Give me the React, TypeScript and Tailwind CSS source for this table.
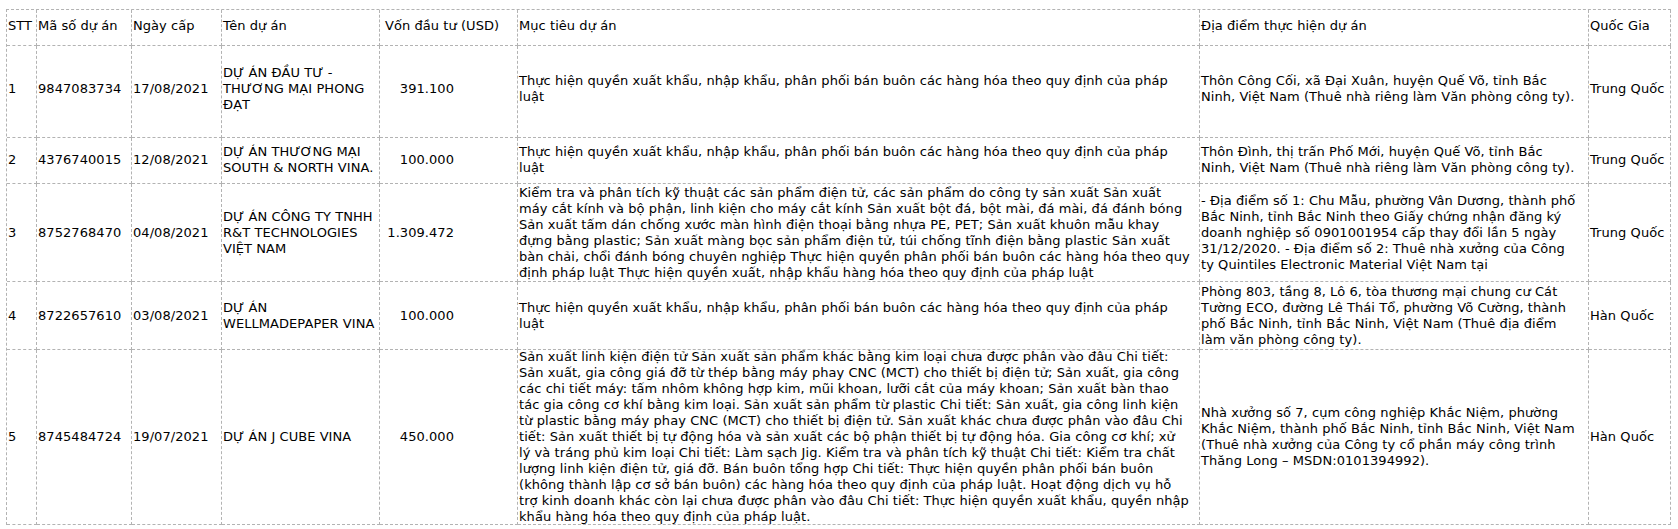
import React from "react";

type Row = {
  stt: string;
  ma: string;
  ngay: string;
  ten: string[];
  von: string;
  muc: string[];
  dia: string[];
  qg: string;
  h: string;
};

const mucChung = [
  "Thực hiện quyền xuất khẩu, nhập khẩu, phân phối bán buôn các hàng hóa theo quy định của pháp",
  "luật",
];

const rows: Row[] = [
  {
    stt: "1",
    ma: "9847083734",
    ngay: "17/08/2021",
    ten: ["DỰ ÁN ĐẦU TƯ -", "THƯƠNG MẠI PHONG", "ĐẠT"],
    von: "391.100",
    muc: mucChung,
    dia: [
      "Thôn Công Cối, xã Đại Xuân, huyện Quế Võ, tỉnh Bắc",
      "Ninh, Việt Nam (Thuê nhà riêng làm Văn phòng công ty).",
    ],
    qg: "Trung Quốc",
    h: "h-[92px] [&>div]:pb-[5px]",
  },
  {
    stt: "2",
    ma: "4376740015",
    ngay: "12/08/2021",
    ten: ["DỰ ÁN THƯƠNG MẠI", "SOUTH & NORTH VINA."],
    von: "100.000",
    muc: mucChung,
    dia: [
      "Thôn Đình, thị trấn Phố Mới, huyện Quế Võ, tỉnh Bắc",
      "Ninh, Việt Nam (Thuê nhà riêng làm Văn phòng công ty).",
    ],
    qg: "Trung Quốc",
    h: "h-[46px] [&>div]:pb-[1px]",
  },
  {
    stt: "3",
    ma: "8752768470",
    ngay: "04/08/2021",
    ten: ["DỰ ÁN CÔNG TY TNHH", "R&T TECHNOLOGIES", "VIỆT NAM"],
    von: "1.309.472",
    muc: [
      "Kiểm tra và phân tích kỹ thuật các sản phẩm điện tử, các sản phẩm do công ty sản xuất Sản xuất",
      "máy cắt kính và bộ phận, linh kiện cho máy cắt kính Sản xuất bột đá, bột mài, đá mài, đá đánh bóng",
      "Sản xuất tấm dán chống xước màn hình điện thoại bằng nhựa PE, PET; Sản xuất khuôn mẫu khay",
      "đựng bằng plastic; Sản xuất màng bọc sản phẩm điện tử, túi chống tĩnh điện bằng plastic Sản xuất",
      "bàn chải, chổi đánh bóng chuyên nghiệp Thực hiện quyền phân phối bán buôn các hàng hóa theo quy",
      "định pháp luật Thực hiện quyền xuất, nhập khẩu hàng hóa theo quy định của pháp luật",
    ],
    dia: [
      "- Địa điểm số 1: Chu Mẫu, phường Vân Dương, thành phố",
      "Bắc Ninh, tỉnh Bắc Ninh theo Giấy chứng nhận đăng ký",
      "doanh nghiệp số 0901001954 cấp thay đổi lần 5 ngày",
      "31/12/2020. - Địa điểm số 2: Thuê nhà xưởng của Công",
      "ty Quintiles Electronic Material Việt Nam tại",
    ],
    qg: "Trung Quốc",
    h: "h-[98px]",
  },
  {
    stt: "4",
    ma: "8722657610",
    ngay: "03/08/2021",
    ten: ["DỰ ÁN", "WELLMADEPAPER VINA"],
    von: "100.000",
    muc: mucChung,
    dia: [
      "Phòng 803, tầng 8, Lô 6, tòa thương mại chung cư Cát",
      "Tường ECO, đường Lê Thái Tổ, phường Võ Cường, thành",
      "phố Bắc Ninh, tỉnh Bắc Ninh, Việt Nam (Thuê địa điểm",
      "làm văn phòng công ty).",
    ],
    qg: "Hàn Quốc",
    h: "h-[68px]",
  },
  {
    stt: "5",
    ma: "8745484724",
    ngay: "19/07/2021",
    ten: ["DỰ ÁN J CUBE VINA"],
    von: "450.000",
    muc: [
      "Sản xuất linh kiện điện tử Sản xuất sản phẩm khác bằng kim loại chưa được phân vào đâu Chi tiết:",
      "Sản xuất, gia công giá đỡ từ thép bằng máy phay CNC (MCT) cho thiết bị điện tử; Sản xuất, gia công",
      "các chi tiết máy: tấm nhôm không hợp kim, mũi khoan, lưỡi cắt của máy khoan; Sản xuất bàn thao",
      "tác gia công cơ khí bằng kim loại. Sản xuất sản phẩm từ plastic Chi tiết: Sản xuất, gia công linh kiện",
      "từ plastic bằng máy phay CNC (MCT) cho thiết bị điện tử. Sản xuất khác chưa được phân vào đâu Chi",
      "tiết: Sản xuất thiết bị tự động hóa và sản xuất các bộ phận thiết bị tự động hóa. Gia công cơ khí; xử",
      "lý và tráng phủ kim loại Chi tiết: Làm sạch Jig. Kiểm tra và phân tích kỹ thuật Chi tiết: Kiểm tra chất",
      "lượng linh kiện điện tử, giá đỡ. Bán buôn tổng hợp Chi tiết: Thực hiện quyền phân phối bán buôn",
      "(không thành lập cơ sở bán buôn) các hàng hóa theo quy định của pháp luật. Hoạt động dịch vụ hỗ",
      "trợ kinh doanh khác còn lại chưa được phân vào đâu Chi tiết: Thực hiện quyền xuất khẩu, quyền nhập",
      "khẩu hàng hóa theo quy định của pháp luật.",
    ],
    dia: [
      "Nhà xưởng số 7, cụm công nghiệp Khắc Niệm, phường",
      "Khắc Niệm, thành phố Bắc Ninh, tỉnh Bắc Ninh, Việt Nam",
      "(Thuê nhà xưởng của Công ty cổ phần máy công trình",
      "Thăng Long – MSDN:0101394992).",
    ],
    qg: "Hàn Quốc",
    h: "h-[175px]",
  },
];

const cell =
  "flex items-center border-r border-b border-dashed border-[#b3b3b3] px-[1px] overflow-hidden";

function Lines({ lines }: { lines: string[] }) {
  return (
    <div>
      {lines.map((l, i) => (
        <div key={i} className="whitespace-nowrap">
          {l}
        </div>
      ))}
    </div>
  );
}

const gridCols =
  "grid grid-cols-[30px_95px_90px_158px_138px_682px_389px_82px]";

export default function App() {
  return (
    <div
      className="min-h-[529px] w-[1678px] bg-white pl-[6px] pt-[9px] text-[13px] leading-[16px] tracking-[0.06px] text-black"
      style={{ fontFamily: '"DejaVu Sans", sans-serif' }}
    >
      <div className="w-[1665px] border-l border-t border-dashed border-[#b3b3b3]">
        <div className={`${gridCols} h-[36px] [&>div]:pb-[3px]`}>
          <div className={cell}>STT</div>
          <div className={cell}>Mã số dự án</div>
          <div className={cell}>Ngày cấp</div>
          <div className={cell}>Tên dự án</div>
          <div className={`${cell} pl-[5px]`}>Vốn đầu tư (USD)</div>
          <div className={cell}>Mục tiêu dự án</div>
          <div className={cell}>Địa điểm thực hiện dự án</div>
          <div className={cell}>Quốc Gia</div>
        </div>
        {rows.map((r) => (
          <div key={r.stt} className={`${gridCols} ${r.h}`}>
            <div className={cell}>{r.stt}</div>
            <div className={cell}>{r.ma}</div>
            <div className={cell}>{r.ngay}</div>
            <div className={cell}>
              <Lines lines={r.ten} />
            </div>
            <div className={`${cell} justify-end pr-[63px]`}>{r.von}</div>
            <div className={cell}>
              <Lines lines={r.muc} />
            </div>
            <div className={cell}>
              <Lines lines={r.dia} />
            </div>
            <div className={cell}>{r.qg}</div>
          </div>
        ))}
      </div>
    </div>
  );
}
